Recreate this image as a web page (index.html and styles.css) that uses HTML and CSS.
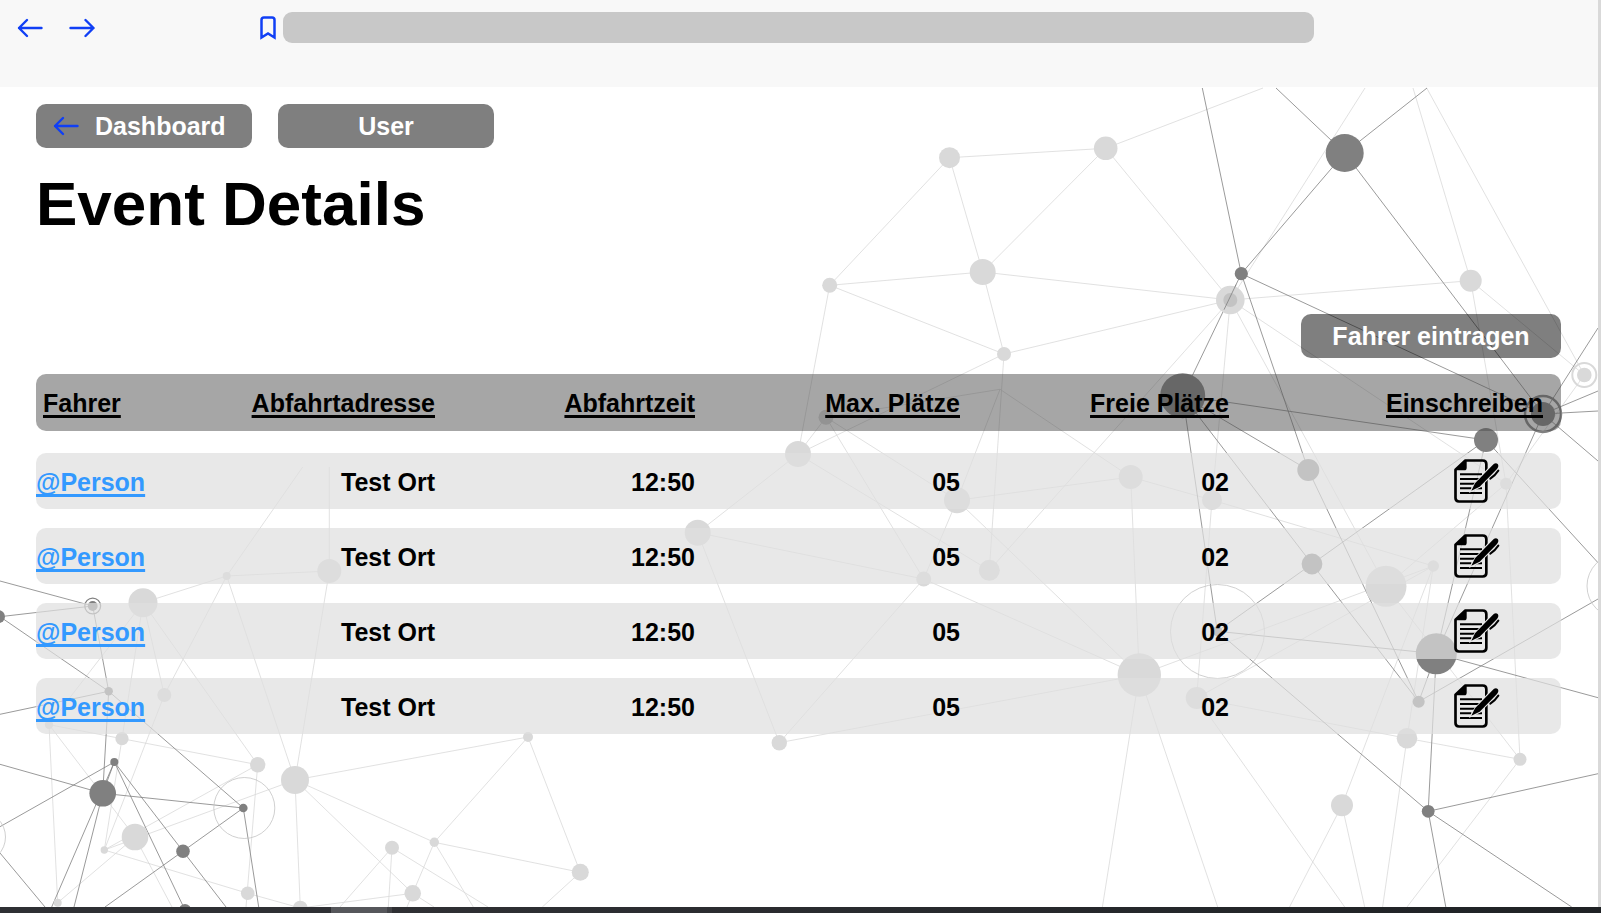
FILE: index.html
```html
<!DOCTYPE html>
<html lang="de">
<head>
<meta charset="utf-8">
<meta name="viewport" content="width=device-width, initial-scale=1">
<title>Event Details</title>
<link rel="stylesheet" href="styles.css">
</head>
<body>
<svg class="sprite" aria-hidden="true">
  <symbol id="arrow-left" viewBox="0 0 26 20"><path d="M24.500 10H2M10 2L2 10l8 8" fill="none" stroke="#103ff5" stroke-width="2.400" stroke-linecap="round" stroke-linejoin="round"/></symbol>
  <symbol id="arrow-right" viewBox="0 0 26 20"><path d="M1.500 10H24.500M16.500 2l8 8-8 8" fill="none" stroke="#103ff5" stroke-width="2.400" stroke-linecap="round" stroke-linejoin="round"/></symbol>
  <symbol id="bookmark" viewBox="0 0 16 24"><path d="M1.500 21.500V4Q1.500 1.500 4 1.500h8q2.500 0 2.500 2.500v17.500L8 17.500z" fill="none" stroke="#103ff5" stroke-width="2.500"/></symbol>
  <symbol id="sign-up" viewBox="0 0 138 132">
    <path d="M34 4.500H86Q97 4.500 97 15V117Q97 127.500 86 127.500H15Q4.500 127.500 4.500 117V32z" fill="none" stroke="#000" stroke-width="8" stroke-linejoin="round"/>
    <path d="M4 32L33 4h5v22q0 8-7 8H4z"/>
    <path d="M18 46H84M18 60H80M18 74H68M18 88H52M64 88H84M18 102H84" stroke="#000" stroke-width="6"/>
    <path d="M53 94L64 74 114 20Q124 9 131 15Q137 21 129 30L76 83z" fill="#e8e8e8" stroke="#e8e8e8" stroke-width="7"/>
    <path d="M52 95L63 73 114 20Q124 9 131 15Q136 21 129 30L77 83z"/>
    <path d="M109 59Q123 50 133 35" fill="none" stroke="#000" stroke-width="6" stroke-linecap="round"/>
  </symbol>
</svg>

<div class="screen">
  <header class="browser-bar">
    <nav class="history">
      <button type="button" class="icon-button" aria-label="Zurück"><svg class="arrow"><use href="#arrow-left"/></svg></button>
      <button type="button" class="icon-button" aria-label="Vorwärts"><svg class="arrow"><use href="#arrow-right"/></svg></button>
    </nav>
    <button type="button" class="icon-button" aria-label="Lesezeichen"><svg class="bookmark"><use href="#bookmark"/></svg></button>
    <input class="address" type="text" aria-label="Adresse">
  </header>

  <main class="stage">
    <svg class="network" viewBox="0 87 1598 820" preserveAspectRatio="xMidYMid slice" aria-hidden="true">
      <!-- faint connections, right cluster -->
      <path class="line" d="M949.5 157.700L1105.700 148.300L1263 88M949.500 157.700L982.700 272L1105.700 148.300L1230.300 300L982.700 272L829.700 285.300L949.500 157.700M982.700 272L1004 354L829.700 285.300L798 454L1004 354L1230.300 300M1004 354L989.300 570.300L1230.300 300M1000 389.300L826 417.300L957 500.300L1000 389.300L1130.700 477L957 500.300L1139.300 675L1130.700 477L1212 500L1433.300 566M826 417.300L798 454L697.700 532.700L923.700 579L826 417.300M798 454L989.300 570.300M697.700 532.700L779.300 742.700L923.700 579L957 500.300M923.700 579L1139.300 675L779.300 742.700"/>
      <path class="line" d="M1230.300 300L1212 500L1196.700 698M1230.300 300L1506 483.700L1386 586.300L1230.300 300L1365 88M1230.300 300L1470.700 280.700L1413 88M1470.700 280.700L1584.300 375L1426.700 88M1470.700 280.700L1506 483.700L1584.300 375M1506 483.700L1520 759.300L1386 586.300M1139.300 675L1433.300 566L1196.700 698L1407 738.300L1520 759.300L1407 907M1433.300 566L1342 805.300L1289.500 907M1342 805.300L1364.700 907M1433.300 566L1407 738.300L1382.600 907M1139.300 675L1102.400 907M1139.300 675L1217.700 907M1196.700 698L1344.700 907"/>
      <!-- faint connections, left cluster -->
      <path class="line" d="M143 602.700L226.700 576L329.300 571V467M226.700 576L302.700 467M226.700 576L164.300 695L143 602.700L49 724.700M226.700 576L295 780L329.300 571M143 602.700L122 738.700L104.300 850L164.300 695M143 602.700L257.700 764.700L49 724.700L57.700 902.700L135 837L49 724.700M257.700 764.700L104.300 850L295 780L300.300 908L247.700 893.300L104.300 850M257.700 764.700L246 907M135 837L172 907M295 780L528 737L580.300 872.300L434.300 842.300L295 780L412.700 893.300L434.300 842.300L528 737M434.300 842.300L473.300 907M392 847.700L340 907M392 847.700L388.300 907M392 847.700L488 907M412.700 893.300L300.300 908M412.700 893.300L434 907M412.700 893.300L407 907M580.300 872.300L542.300 907"/>
      <!-- strong connections -->
      <path class="line strong" d="M1276 88L1344.700 153L1427 88M1344.700 153L1241.300 273.700L1202.300 88M1344.700 153L1543 414L1241.300 273.700L1182.700 395.700L1486 440L1312 564L1182.700 395.700L1308.300 470L1241.300 273.700M1182.700 395.700L1217.300 631.300L1312 564L1418.700 701.700L1308.300 470M1217.300 631.300L1436.300 653.700L1486 440L1598 562.700M1543 414L1436.300 653.700L1598 697.700M1543 414L1598 328M1543 414L1598 391M1543 414L1598 411M1543 414L1598 461M1436.300 653.700L1418.700 701.700L1598 599M1436.300 653.700L1428.200 811.300L1217.300 631.300M1598 773.700L1428.200 811.300L1571.700 907M1428.200 811.300L1445.800 907"/>
      <path class="line strong" d="M0 581L92.700 606L0 616.700L108.700 691.300L92.700 606M0 714.300L108.700 691.300L243.300 808L102.700 793.300L108.700 691.300M0 764.300L102.700 793.300L114.300 762L0 826.700M114.300 762L185 910M114.300 762L226 907M243.300 808L105 907M243.300 808L258.700 907M102.700 793.300L74 907M114.300 762L51.700 907M0 853L45 907"/>
      <g class="ring-thin">
        <circle cx="1217.500" cy="631.500" r="47"/><circle cx="1619" cy="586" r="32"/><circle cx="244.300" cy="808" r="30.500"/><circle cx="-20" cy="837" r="25.500"/>
      </g>
      <g class="node">
        <circle cx="949.500" cy="157.700" r="10.500"/><circle cx="1105.700" cy="148.300" r="11.800"/><circle cx="982.700" cy="272" r="13"/><circle cx="829.700" cy="285.300" r="7.500"/><circle cx="1004" cy="354" r="7"/><circle cx="798" cy="454" r="13"/><circle cx="826" cy="417.300" r="7.500"/><circle cx="957" cy="500.300" r="13"/><circle cx="1130.700" cy="477" r="12"/><circle cx="697.700" cy="532.700" r="13"/><circle cx="923.700" cy="579" r="7.500"/><circle cx="989.300" cy="570.300" r="10.500"/><circle cx="779.300" cy="742.700" r="7.700"/><circle cx="1139.300" cy="675" r="21.700"/><circle cx="1230.300" cy="300" r="14.300"/><circle cx="1470.700" cy="280.700" r="11"/><circle cx="1584.300" cy="375" r="7.300"/><circle cx="1212" cy="500" r="10"/><circle cx="1386" cy="586.300" r="20.500"/><circle cx="1433.300" cy="566" r="5.700"/><circle cx="1506" cy="483.700" r="6"/><circle cx="1196.700" cy="698" r="11"/><circle cx="1407" cy="738.300" r="10.300"/><circle cx="1520" cy="759.300" r="6.500"/><circle cx="1342" cy="805.300" r="11"/>
        <circle cx="143" cy="602.700" r="14.500"/><circle cx="226.700" cy="576" r="4"/><circle cx="329.300" cy="571" r="12"/><circle cx="164.300" cy="695" r="7"/><circle cx="49" cy="724.700" r="4.200"/><circle cx="122" cy="738.700" r="6.600"/><circle cx="257.700" cy="764.700" r="7.700"/><circle cx="295" cy="780" r="14"/><circle cx="135" cy="837" r="13.300"/><circle cx="104.300" cy="850" r="3.700"/><circle cx="247.700" cy="893.300" r="6.800"/><circle cx="300.300" cy="908" r="7.300"/><circle cx="57.700" cy="902.700" r="4"/><circle cx="528" cy="737" r="5"/><circle cx="434.300" cy="842.300" r="4.700"/><circle cx="392" cy="847.700" r="7"/><circle cx="412.700" cy="893.300" r="8.300"/><circle cx="580.300" cy="872.300" r="8.500"/>
      </g>
      <circle class="ring" cx="1584.300" cy="375" r="12"/>
      <circle class="core" cx="1230.300" cy="300" r="7"/>
      <path class="line strong" d="M1236 284.700L1224 309.700"/>
      <g class="node strong">
        <circle cx="1344.700" cy="153" r="19"/><circle cx="1241.300" cy="273.700" r="6.600"/><circle cx="1182.700" cy="395.700" r="22.500"/><circle cx="1543" cy="414" r="12"/><circle cx="1486" cy="440" r="12"/><circle cx="1308.300" cy="470" r="11"/><circle cx="1312" cy="564" r="10.400"/><circle cx="1217.300" cy="631.300" r="5"/><circle cx="1436.300" cy="653.700" r="20.500"/><circle cx="1418.700" cy="701.700" r="6"/><circle cx="1428.200" cy="811.300" r="6.400"/>
        <circle cx="92.700" cy="606" r="4.900"/><circle cx="-1.500" cy="616.700" r="6.500"/><circle cx="108.700" cy="691.300" r="4.200"/><circle cx="114.300" cy="762" r="4"/><circle cx="102.700" cy="793.300" r="13.300"/><circle cx="183" cy="851.300" r="6.800"/><circle cx="243.300" cy="808" r="4.300"/><circle cx="185" cy="910" r="6"/>
      </g>
      <circle class="ring strong" cx="1543" cy="414" r="18"/>
      <circle class="ring strong small" cx="92.700" cy="606" r="7.900"/>
    </svg>

    <nav class="toolbar">
      <button type="button" class="button back"><svg class="arrow"><use href="#arrow-left"/></svg>Dashboard</button>
      <button type="button" class="button">User</button>
    </nav>
    <h1 class="title">Event Details</h1>
    <div class="actions"><button type="button" class="button wide">Fahrer eintragen</button></div>

    <table class="rides">
      <thead>
        <tr class="row head"><th scope="col">Fahrer</th><th scope="col">Abfahrtadresse</th><th scope="col">Abfahrtzeit</th><th scope="col">Max. Plätze</th><th scope="col">Freie Plätze</th><th scope="col">Einschreiben</th></tr>
      </thead>
      <tbody>
        <tr class="row"><td><a class="person" href="#person">@Person</a></td><td>Test Ort</td><td>12:50</td><td>05</td><td>02</td><td><button type="button" class="icon-button" aria-label="Einschreiben"><svg class="sign-up"><use href="#sign-up"/></svg></button></td></tr>
        <tr class="row"><td><a class="person" href="#person">@Person</a></td><td>Test Ort</td><td>12:50</td><td>05</td><td>02</td><td><button type="button" class="icon-button" aria-label="Einschreiben"><svg class="sign-up"><use href="#sign-up"/></svg></button></td></tr>
        <tr class="row"><td><a class="person" href="#person">@Person</a></td><td>Test Ort</td><td>12:50</td><td>05</td><td>02</td><td><button type="button" class="icon-button" aria-label="Einschreiben"><svg class="sign-up"><use href="#sign-up"/></svg></button></td></tr>
        <tr class="row"><td><a class="person" href="#person">@Person</a></td><td>Test Ort</td><td>12:50</td><td>05</td><td>02</td><td><button type="button" class="icon-button" aria-label="Einschreiben"><svg class="sign-up"><use href="#sign-up"/></svg></button></td></tr>
      </tbody>
    </table>
  </main>
</div>
<footer class="dock"></footer>
</body>
</html>
```
FILE: styles.css
```css
* {
  box-sizing: border-box;
}

body {
  margin: 0;
  min-height: 100vh;
  display: flex;
  flex-direction: column;
  background: #fff;
  color: #000;
  font: bold 25px/30px "Liberation Sans", Arial, sans-serif;
}

.sprite {
  position: absolute;
  width: 0;
  height: 0;
}

.screen {
  flex: 1;
  display: flex;
  flex-direction: column;
  border-right: 3px solid #d9d9d9;
}

button {
  border: 0;
  font: inherit;
  cursor: pointer;
}

.icon-button {
  display: block;
  padding: 0;
  background: none;
}

.icon-button svg {
  display: block;
}

.arrow {
  width: 26px;
  height: 20px;
}

.bookmark {
  width: 16px;
  height: 24px;
}

/* Browser bar */
.browser-bar {
  display: flex;
  align-items: center;
  padding: 12px 284px 44px 17px;
  background: #f8f8f8;
}

.history {
  display: flex;
  gap: 26px;
  margin-right: 165px;
}

.address {
  flex: 1;
  min-width: 0;
  height: 31px;
  margin-left: 7px;
  padding: 0 12px;
  border: 0;
  border-radius: 9px;
  background: #c8c8c8;
  font: 16px/20px "Liberation Sans", Arial, sans-serif;
}

/* Page */
.stage {
  position: relative;
  flex: 1;
  padding: 17px 37px 40px 36px;
  overflow: hidden;
}

.stage > * {
  position: relative;
}

.stage > .network {
  position: absolute;
  inset: 0;
  width: 100%;
  height: 100%;
}

.line,
.ring,
.ring-thin {
  fill: none;
  stroke: #d9d9d9;
}

.line {
  stroke-width: 0.8px;
}

.ring-thin {
  stroke: #c4c4c4;
  stroke-width: 0.8px;
}

.ring {
  stroke-width: 2px;
}

.node {
  fill: #d9d9d9;
}

.core {
  fill: #c3c3c3;
}

.line.strong,
.ring.strong {
  stroke: #808080;
}

.ring.strong {
  stroke-width: 2.5px;
}

.ring.strong.small {
  stroke-width: 1.3px;
}

.node.strong {
  fill: #808080;
}

.toolbar {
  display: flex;
  gap: 26px;
}

.button {
  display: flex;
  align-items: center;
  justify-content: center;
  width: 216px;
  height: 44px;
  padding: 0;
  border-radius: 10px;
  background: rgba(0, 0, 0, 0.5);
  color: #fff;
}

.back {
  justify-content: flex-start;
  gap: 16px;
  padding-left: 17px;
}

.wide {
  width: 260px;
}

.title {
  margin: 20px 0 74px;
  font-size: 62px;
  line-height: 72px;
}

.actions {
  display: flex;
  justify-content: flex-end;
  margin-bottom: 16px;
}

/* Rides */
.rides,
.rides tbody {
  display: flex;
  flex-direction: column;
}

.rides {
  gap: 22px;
}

.rides tbody {
  gap: 19px;
}

.row {
  display: grid;
  grid-template-columns: 171fr 228fr 260fr 265fr 269fr 332fr;
  align-items: center;
  height: 56px;
  border-radius: 10px;
  background: rgba(223, 223, 223, 0.71);
}

.row.head {
  height: 57px;
  background: rgba(77, 77, 77, 0.5);
}

.row th,
.row td {
  padding: 0;
  text-align: right;
  white-space: nowrap;
}

.row td {
  padding-top: 1px;
}

.row th {
  text-decoration: underline;
  text-decoration-thickness: 3px;
  text-decoration-skip-ink: none;
  text-underline-offset: 3px;
}

.row > :first-child {
  text-align: left;
}

.row th:first-child {
  padding-left: 7px;
}

.row th:last-child {
  padding-right: 18px;
}

.row td:last-child {
  display: flex;
  justify-content: flex-end;
  padding: 0 61px 0 0;
}

.person {
  color: #3399ff;
  text-decoration-thickness: 3px;
  text-decoration-skip-ink: none;
  text-underline-offset: 3px;
}

.sign-up {
  width: 46px;
  height: 44px;
}

/* Dock */
.dock {
  height: 6px;
  background: linear-gradient(90deg, #2f3034 331px, #56575b 331px 387px, #434448 387px 392px, #2f3034 392px, #1f2225);
}
```
